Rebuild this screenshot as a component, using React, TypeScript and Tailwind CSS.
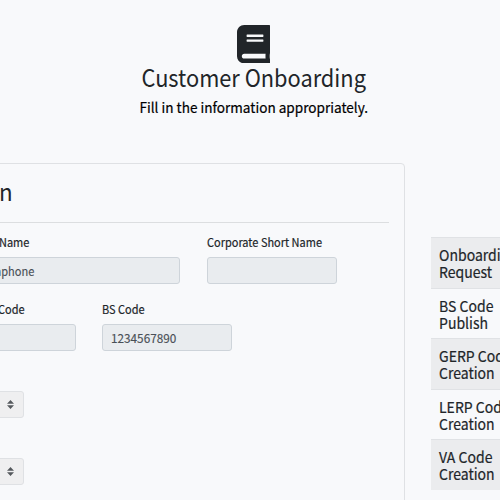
import React from "react";
import { FaBook } from "react-icons/fa";

const steps = [
  ["Onboarding", "Request"],
  ["BS Code", "Publish"],
  ["GERP Code", "Creation"],
  ["LERP Code", "Creation"],
  ["VA Code", "Creation"],
];

function Label({ children, className = "" }: { children: string; className?: string }) {
  return (
    <div className="h-[26px] w-0 pt-[3px] whitespace-nowrap text-[12px] leading-[15px] text-[#212529]">
      <span className={"inline-block origin-left scale-x-[0.915] [-webkit-text-stroke:0.2px] " + className}>{children}</span>
    </div>
  );
}

function Field({ value = "", className = "", textClass = "scale-x-[0.98]" }: { value?: string; className?: string; textClass?: string }) {
  return (
    <div className={"flex h-[27px] items-center rounded-[3px] border border-[#ced4da] bg-[#e9ecef] text-[12px] whitespace-nowrap text-[#495057] [-webkit-text-stroke:0.15px] " + className}>
      <span className={"inline-block origin-left " + textClass}>{value}</span>
    </div>
  );
}

function Select() {
  return (
    <div className="flex h-[27px] w-[34px] items-center justify-end rounded-[3px] border border-[#dfe1e4] bg-[#efeff0] pr-[9px]">
      <svg width="7" height="9" viewBox="0 0 7 9" fill="#55595d">
        <path d="M3.5 0 L7 3.7 H0Z M0 5.3 H7 L3.5 9Z" />
      </svg>
    </div>
  );
}

export default function App() {
  return (
    <div className="h-[500px] w-[500px] overflow-hidden bg-[#f8f9fb] font-['Noto_Sans_CJK_KR',sans-serif] text-[#212529]">
      <header className="flex h-[163px] flex-col items-center pt-[25px] pl-[7px]">
        <FaBook className="h-[38.4px] w-[33.6px] shrink-0" />
        <h1 className="scale-x-[0.907] whitespace-nowrap text-[24px] leading-[28px]">Customer Onboarding</h1>
        <p className="mt-[6px] scale-x-[0.97] whitespace-nowrap text-[14px] leading-[20px] text-black [-webkit-text-stroke:0.2px]">Fill in the information appropriately.</p>
      </header>
      <main className="flex items-start">
        <section className="-ml-[10px] h-[360px] w-[415px] shrink-0 rounded-[4px] border border-[#dfe1e4] pt-[14px] pr-[15px] pl-[9px]">
          <h2 className="h-[45px] border-b border-[#dcdee0] text-[24px] leading-[25px]"><span className="-ml-[1px] inline-block origin-left scale-x-[0.93]">n</span></h2>
          <div className="mt-[8px] flex gap-[27px]">
            <div><Label className="-ml-[1px]">Name</Label><Field value="aphone" className="-ml-[5px] w-[185px]" textClass="-ml-[1px] scale-x-[0.92]" /></div>
            <div><Label>Corporate Short Name</Label><Field className="w-[130px]" /></div>
          </div>
          <div className="mt-[14px] flex gap-[26px]">
            <div><Label className="-ml-[2px]">Code</Label><Field className="-ml-[10px] w-[86px]" /></div>
            <div><Label>BS Code</Label><Field value="1234567890" className="w-[130px] pl-[8px]" /></div>
          </div>
          <div className="mt-[40px] -ml-[10px] flex flex-col gap-[40px]">
            <Select />
            <Select />
          </div>
        </section>
        <aside className="mt-[74px] ml-[26px] w-[140px] shrink-0">
          {steps.map(([first, second], i) => (
            <div key={i} className={"h-[50.6px] border-t border-[#e0e2e5] px-[8px] pt-[8px] text-[15px] leading-[17px] whitespace-nowrap " + (i % 2 === 0 ? "bg-[#ebecee]" : "")}>
              <div className="origin-left scale-x-[0.935] [-webkit-text-stroke:0.2px]">{first}</div>
              <div className="origin-left scale-x-[0.935] [-webkit-text-stroke:0.2px]">{second}</div>
            </div>
          ))}
        </aside>
      </main>
    </div>
  );
}
